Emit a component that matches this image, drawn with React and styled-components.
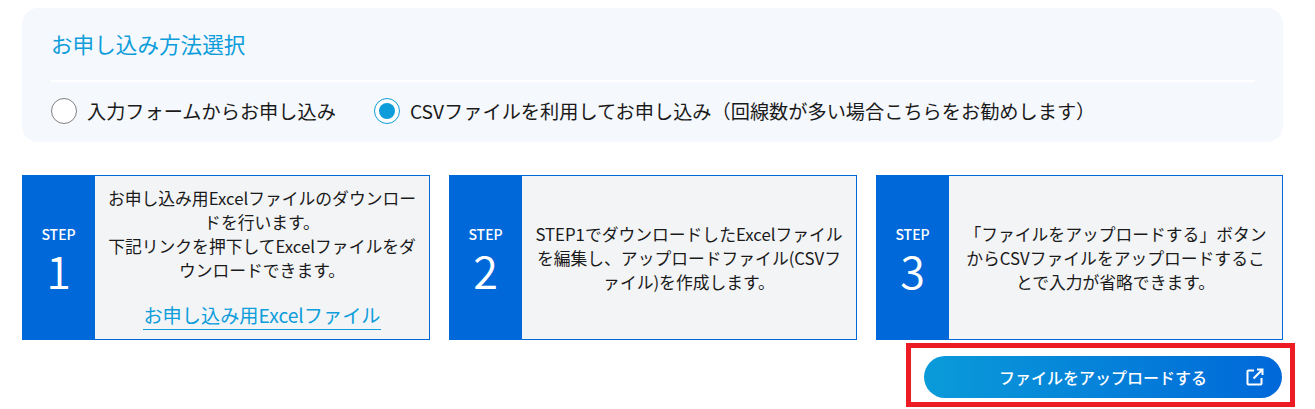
import React from "react";
import styled, { createGlobalStyle } from "styled-components";

const Global = createGlobalStyle`
  html, body { margin: 0; padding: 0; background: #fff; }
  body { font-family: "Noto Sans CJK JP", "Noto Sans", sans-serif; color: #1a1a1a; }
  * { box-sizing: border-box; }
`;

const Page = styled.div`
  width: 1315px;
  height: 409px;
  padding: 8px 32px 0 22px;
  overflow: hidden;
`;

const MethodPanel = styled.section`
  height: 134px;
  background: #f5f8fc;
  border-radius: 16px;
  padding: 20px 28px 0 29px;
`;

const Title = styled.h2`
  margin: 0;
  height: 54px;
  font-size: 21.6px;
  line-height: 32px;
  font-weight: 400;
  color: #0d9ddb;
  border-bottom: 2px solid #fff;
`;

const RadioRow = styled.div`
  display: flex;
  align-items: center;
  gap: 38px;
  margin-top: 14px;
`;

const RadioLabel = styled.label`
  display: flex;
  align-items: center;
  gap: 10px;
  font-size: 19.2px;
  line-height: 27px;
`;

const RadioText = styled.span`
  padding-top: 2px;
`;

const RadioCircle = styled.span`
  flex: none;
  width: 26px;
  height: 26px;
  border-radius: 50%;
  background: #fff;
  border: 1px solid ${(p) => (p.$checked ? "#0d9ddb" : "#808080")};
  display: flex;
  align-items: center;
  justify-content: center;
  &::after {
    content: "";
    display: ${(p) => (p.$checked ? "block" : "none")};
    width: 16px;
    height: 16px;
    border-radius: 50%;
    background: #0d9ddb;
  }
`;

const Steps = styled.div`
  display: grid;
  grid-template-columns: 408px 408px 407px;
  gap: 19px;
  margin-top: 33px;
`;

const StepCard = styled.article`
  display: flex;
  height: 165px;
  border: 1px solid #0068d9;
  background: #f3f4f6;
`;

const StepBadge = styled.div`
  flex: none;
  width: 73px;
  margin: -1px 0 -1px -1px;
  background: #0068d9;
  color: #fff;
  display: flex;
  flex-direction: column;
  align-items: center;
  padding-top: 49px;
`;

const StepLabel = styled.span`
  font-size: 14px;
  line-height: 20px;
  font-weight: 500;
`;

const StepNumber = styled.span`
  font-size: 45px;
  line-height: 52px;
  font-weight: 350;
`;

const StepBody = styled.div`
  flex: 1;
  display: flex;
  flex-direction: column;
  justify-content: center;
  align-items: center;
  padding: 0 12px;
  text-align: center;
  font-size: 16.8px;
  line-height: 24px;
`;

const StepLink = styled.a`
  margin-top: 20px;
  margin-bottom: -1px;
  font-size: 19.2px;
  line-height: 27px;
  color: #0d9ddb;
  border-bottom: 1px solid #0d9ddb;
`;

const UploadRow = styled.div`
  position: relative;
  display: flex;
  justify-content: flex-end;
  margin-top: 16px;
`;

const UploadButton = styled.button`
  position: relative;
  width: 358px;
  height: 42px;
  margin-right: 1px;
  border: 0;
  border-radius: 21px;
  background: linear-gradient(90deg, #0a9bd9 0%, #0068d9 100%);
  color: #fff;
  font-family: inherit;
  font-size: 16px;
  font-weight: 500;
  display: flex;
  align-items: center;
  justify-content: center;
  padding: 0;
`;

const ExternalIcon = styled.svg`
  position: absolute;
  right: 18px;
  top: 12px;
  width: 18px;
  height: 18px;
`;

const Highlight = styled.div`
  position: absolute;
  left: 884px;
  top: -13px;
  width: 389px;
  height: 64px;
  border: 5px solid #ed1c24;
  pointer-events: none;
`;

export default function App() {
  return (
    <Page>
      <Global />
      <MethodPanel>
        <Title>お申し込み方法選択</Title>
        <RadioRow>
          <RadioLabel><RadioCircle /><RadioText>入力フォームからお申し込み</RadioText></RadioLabel>
          <RadioLabel><RadioCircle $checked /><RadioText>CSVファイルを利用してお申し込み（回線数が多い場合こちらをお勧めします）</RadioText></RadioLabel>
        </RadioRow>
      </MethodPanel>
      <Steps>
        <StepCard>
          <StepBadge><StepLabel>STEP</StepLabel><StepNumber>1</StepNumber></StepBadge>
          <StepBody>
            <div>お申し込み用Excelファイルのダウンロードを行います。<br />下記リンクを押下してExcelファイルをダウンロードできます。</div>
            <StepLink>お申し込み用Excelファイル</StepLink>
          </StepBody>
        </StepCard>
        <StepCard>
          <StepBadge><StepLabel>STEP</StepLabel><StepNumber>2</StepNumber></StepBadge>
          <StepBody><div>STEP1でダウンロードしたExcelファイルを編集し、アップロードファイル(CSVファイル)を作成します。</div></StepBody>
        </StepCard>
        <StepCard>
          <StepBadge><StepLabel>STEP</StepLabel><StepNumber>3</StepNumber></StepBadge>
          <StepBody><div>「ファイルをアップロードする」ボタンからCSVファイルをアップロードすることで入力が省略できます。</div></StepBody>
        </StepCard>
      </Steps>
      <UploadRow>
        <UploadButton>
          ファイルをアップロードする
          <ExternalIcon viewBox="0 0 18 18" fill="none" stroke="#fff" strokeWidth="2">
            <path d="M8 2.500H2.500a1 1 0 0 0-1 1V15.500a1 1 0 0 0 1 1h12a1 1 0 0 0 1-1V10" />
            <path d="M11 1.500h5.500V7M16.500 1.500 7.500 10.500" />
          </ExternalIcon>
        </UploadButton>
        <Highlight />
      </UploadRow>
    </Page>
  );
}
